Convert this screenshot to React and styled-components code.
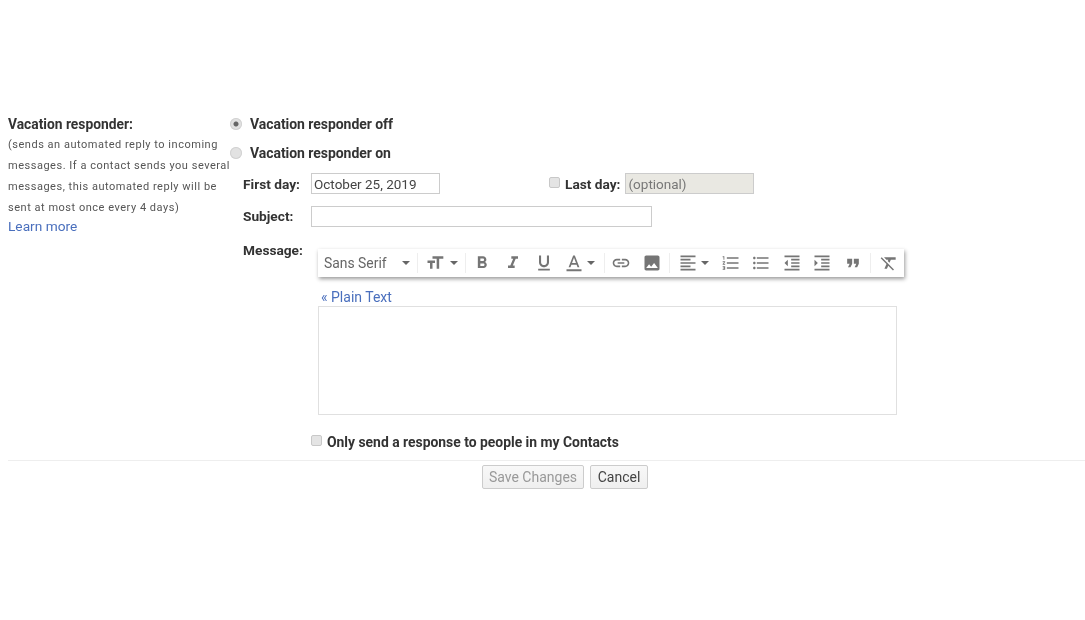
import React from "react";
import styled, { createGlobalStyle } from "styled-components";

const paths = {
  size: "M9 4v3h5v12h3V7h5V4H9zm-6 8h3v7h3v-7h3V9H3v3z",
  bold: "M15.6 10.79c.97-.67 1.65-1.77 1.65-2.79 0-2.26-1.75-4-4-4H7v14h7.04c2.09 0 3.71-1.7 3.71-3.79 0-1.52-.86-2.82-2.15-3.42zM10 6.5h3c.83 0 1.5.67 1.5 1.5s-.67 1.5-1.5 1.5h-3v-3zm3.5 9H10v-3h3.5c.83 0 1.5.67 1.5 1.5s-.67 1.5-1.5 1.5z",
  italic: "M10 4v3h2.21l-3.42 8H6v3h8v-3h-2.21l3.42-8H18V4z",
  underline: "M12 17c3.31 0 6-2.69 6-6V3h-2.5v8c0 1.93-1.57 3.5-3.5 3.5S8.5 12.93 8.5 11V3H6v8c0 3.31 2.69 6 6 6zm-7 2v2h14v-2H5z",
  color: "M11 3L5.5 17h2.25l1.12-3h6.25l1.12 3h2.25L13 3h-2zm-1.38 9L12 5.67 14.38 12H9.62zM3 19.5h18V22H3z",
  link: "M3.9 12c0-1.71 1.39-3.1 3.1-3.1h4V7H7c-2.76 0-5 2.24-5 5s2.24 5 5 5h4v-1.9H7c-1.71 0-3.1-1.39-3.1-3.1zM8 13h8v-2H8v2zm9-6h-4v1.9h4c1.71 0 3.1 1.39 3.1 3.1s-1.39 3.1-3.1 3.1h-4V17h4c2.76 0 5-2.24 5-5s-2.24-5-5-5z",
  image: "M21 19V5c0-1.1-.9-2-2-2H5c-1.1 0-2 .9-2 2v14c0 1.1.9 2 2 2h14c1.1 0 2-.9 2-2zM8.5 13.5l2.5 3.01L14.5 12l4.5 6H5l3.5-4.5z",
  align: "M15 15H3v2h12v-2zm0-8H3v2h12V7zM3 13h18v-2H3v2zm0 8h18v-2H3v2zM3 3v2h18V3H3z",
  ol: "M2 17h2v.5H3v1h1v.5H2v1h3v-4H2v1zm1-9h1V4H2v1h1v3zm-1 3h1.8L2 13.1v.9h3v-1H3.2L5 10.9V10H2v1zm5-6v2h14V5H7zm0 14h14v-2H7v2zm0-6h14v-2H7v2z",
  ul: "M4 10.5c-.83 0-1.5.67-1.5 1.5s.67 1.5 1.5 1.5 1.5-.67 1.5-1.5-.67-1.5-1.5-1.5zm0-6c-.83 0-1.5.67-1.5 1.5S3.17 7.5 4 7.5 5.5 6.83 5.5 6 4.83 4.5 4 4.5zm0 12c-.83 0-1.5.68-1.5 1.5s.68 1.5 1.5 1.5 1.5-.68 1.5-1.5-.67-1.5-1.5-1.5zM7 19h14v-2H7v2zm0-6h14v-2H7v2zm0-8v2h14V5H7z",
  outdent: "M11 17h10v-2H11v2zm-8-5l4 4V8l-4 4zm0 9h18v-2H3v2zM3 3v2h18V3H3zm8 6h10V7H11v2zm0 4h10v-2H11v2z",
  indent: "M3 21h18v-2H3v2zM3 8v8l4-4-4-4zm8 9h10v-2H11v2zM3 3v2h18V3H3zm8 6h10V7H11v2zm0 4h10v-2H11v2z",
  quote: "M6 17h3l2-4V7H5v6h3zm8 0h3l2-4V7h-6v6h3z",
  clear: "M3.27 5L2 6.27l6.97 6.97L6.5 19h3l1.57-3.66L16.73 21 18 19.73 3.55 5.27 3.27 5zM6 5v.18L8.82 8h2.4l-.72 1.68 2.1 2.1L14.21 8H20V5H6z",
};

const GlobalStyle = createGlobalStyle`
  html, body {
    margin: 0;
    background: #fff;
    font-family: Roboto, "Liberation Sans", sans-serif;
    color: #222;
  }
`;

const Page = styled.div`
  width: 1085px;
  height: 620px;
  padding-top: 114px;
  box-sizing: border-box;
  overflow: hidden;
  filter: blur(0.6px);
`;

const Settings = styled.div`
  display: flex;
  padding-left: 8px;
`;

const Sidebar = styled.div`
  width: 222px;
  flex: none;
`;

const Title = styled.div`
  font-size: 13.8px;
  font-weight: 700;
  line-height: 20px;
  color: #333;
`;

const Hint = styled.div`
  margin-top: -0.5px;
  font-size: 11px;
  line-height: 21px;
  letter-spacing: 0.52px;
  color: #555;
  white-space: nowrap;
`;

const LearnMore = styled.a`
  display: block;
  margin-top: -1.5px;
  font-size: 13.7px;
  line-height: 20px;
  color: #4a6fbd;
`;

const Form = styled.div`
  flex: 1;
`;

const RadioRow = styled.label`
  display: flex;
  align-items: center;
  height: 29px;
  margin-top: ${(p) => (p.$first ? "-4.5px" : "0")};
  font-size: 14px;
  font-weight: 700;
  color: #333;
  letter-spacing: -0.05px;
`;

const Radio = styled.span`
  width: 12px;
  height: 12px;
  margin-right: 8px;
  border-radius: 50%;
  background: ${(p) =>
    p.$checked
      ? "radial-gradient(circle, #666 0 2px, #e2e2e2 3px)"
      : "#e2e2e2"};
  box-shadow: inset 0 0 0 1px #d2d2d2;
`;

const FieldRow = styled.div`
  display: flex;
  align-items: center;
  height: ${(p) => p.$height || 32}px;
  padding-left: 13px;
`;

const FieldLabel = styled.span`
  width: 68px;
  flex: none;
  font-size: 13.7px;
  font-weight: 700;
  color: #333;
`;

const TextField = styled.input`
  width: ${(p) => p.$width}px;
  height: 21px;
  padding: 0 2px;
  box-sizing: border-box;
  border: 1px solid #ccc;
  border-radius: 0;
  outline: none;
  font-family: inherit;
  font-size: 13.5px;
  color: #444;
  background: ${(p) => (p.$disabled ? "#e9e8e2" : "#fff")};
  &::placeholder {
    color: #777;
    opacity: 1;
  }
`;

const CheckBox = styled.span`
  display: inline-block;
  flex: none;
  width: 11px;
  height: 11px;
  margin-top: -3px;
  margin-right: 5px;
  border: 1px solid #c8c8c8;
  border-radius: 2px;
  box-sizing: border-box;
  background: #e4e4e4;
`;

const LastDay = styled.label`
  display: flex;
  align-items: center;
  margin-left: 109px;
  font-size: 13.7px;
  font-weight: 700;
  color: #333;
`;

const LastDayText = styled.span`
  margin-right: 5px;
`;

const MessageRow = styled.div`
  display: flex;
  align-items: flex-start;
  padding-left: 13px;
`;

const MessageLabel = styled(FieldLabel)`
  width: 75px;
  line-height: 20px;
  margin-top: 7px;
`;

const Editor = styled.div`
  width: 586px;
  margin-top: 16px;
`;

const Toolbar = styled.div`
  display: flex;
  align-items: center;
  height: 28px;
  padding-left: 6px;
  box-sizing: border-box;
  background: #fff;
  box-shadow: 1px 2px 4px rgba(0, 0, 0, 0.4);
`;

const FontSelect = styled.div`
  display: flex;
  align-items: center;
  width: 92px;
  font-size: 13.9px;
  color: #666;
`;

const FontName = styled.span`
  width: 78px;
`;

const Arrow = styled.span`
  flex: none;
  width: 0;
  height: 0;
  border-left: 4px solid transparent;
  border-right: 4px solid transparent;
  border-top: 4px solid #666;
`;

const Separator = styled.span`
  flex: none;
  width: 1px;
  height: 20px;
  margin: 0 ${(p) => p.$gap || 1}px;
  background: #eee;
`;

const ToolButton = styled.div`
  display: flex;
  align-items: center;
  justify-content: center;
  flex: none;
  box-sizing: border-box;
  width: ${(p) => p.$width || 30.7}px;
  padding-right: ${(p) => p.$pad || 0}px;
  gap: ${(p) => p.$gap || 3}px;
`;

const IconSvg = styled.svg`
  width: 20px;
  height: 20px;
  fill: #757575;
  flex: none;
`;

const Icon = ({ name }) => (
  <IconSvg viewBox="0 0 24 24">
    <path d={paths[name]} />
  </IconSvg>
);

const PlainText = styled.a`
  display: block;
  margin: 11px 0 0 3px;
  font-size: 14px;
  line-height: 18px;
  color: #4a6fbd;
`;

const MessageBox = styled.div`
  width: 579px;
  height: 109px;
  box-sizing: border-box;
  border: 1px solid #e0e0e0;
`;

const ContactsRow = styled.label`
  display: flex;
  align-items: center;
  height: 20px;
  margin: 17px 0 0 81px;
  font-size: 13.9px;
  font-weight: 700;
  color: #333;
`;

const Divider = styled.div`
  height: 1px;
  margin: 8px 0 0 8px;
  background: #eee;
`;

const Actions = styled.div`
  display: flex;
  gap: 6px;
  padding: 4px 0 0 482px;
`;

const ActionButton = styled.button`
  width: ${(p) => p.$width}px;
  height: 24px;
  padding: 0;
  border: 1px solid #ccc;
  border-radius: 2px;
  background: linear-gradient(#f8f8f8, #efefef);
  font-family: inherit;
  font-size: 14px;
  color: ${(p) => (p.disabled ? "#999" : "#444")};
`;

export default function App() {
  return (
    <Page>
      <GlobalStyle />
      <Settings>
        <Sidebar>
          <Title>Vacation responder:</Title>
          <Hint>
            (sends an automated reply to incoming
            <br />
            messages. If a contact sends you several
            <br />
            messages, this automated reply will be
            <br />
            sent at most once every 4 days)
          </Hint>
          <LearnMore>Learn more</LearnMore>
        </Sidebar>
        <Form>
          <RadioRow $first>
            <Radio $checked />
            Vacation responder off
          </RadioRow>
          <RadioRow>
            <Radio />
            Vacation responder on
          </RadioRow>
          <FieldRow>
            <FieldLabel>First day:</FieldLabel>
            <TextField $width={129} defaultValue="October 25, 2019" />
            <LastDay>
              <CheckBox />
              <LastDayText>Last day:</LastDayText>
              <TextField $width={129} $disabled placeholder="(optional)" readOnly />
            </LastDay>
          </FieldRow>
          <FieldRow $height={33}>
            <FieldLabel>Subject:</FieldLabel>
            <TextField $width={341} />
          </FieldRow>
          <MessageRow>
            <MessageLabel>Message:</MessageLabel>
            <Editor>
              <Toolbar>
                <FontSelect>
                  <FontName>Sans Serif</FontName>
                  <Arrow />
                </FontSelect>
                <Separator />
                <ToolButton $width={45} $gap={5}>
                  <Icon name="size" />
                  <Arrow />
                </ToolButton>
                <Separator />
                <ToolButton><Icon name="bold" /></ToolButton>
                <ToolButton><Icon name="italic" /></ToolButton>
                <ToolButton><Icon name="underline" /></ToolButton>
                <ToolButton $width={44} $pad={3}>
                  <Icon name="color" />
                  <Arrow />
                </ToolButton>
                <Separator />
                <ToolButton><Icon name="link" /></ToolButton>
                <ToolButton><Icon name="image" /></ToolButton>
                <Separator $gap={1.5} />
                <ToolButton $width={44}>
                  <Icon name="align" />
                  <Arrow />
                </ToolButton>
                <ToolButton><Icon name="ol" /></ToolButton>
                <ToolButton><Icon name="ul" /></ToolButton>
                <ToolButton $width={30}><Icon name="outdent" /></ToolButton>
                <ToolButton><Icon name="indent" /></ToolButton>
                <ToolButton><Icon name="quote" /></ToolButton>
                <Separator $gap={2} />
                <ToolButton><Icon name="clear" /></ToolButton>
              </Toolbar>
              <PlainText>« Plain Text</PlainText>
              <MessageBox />
            </Editor>
          </MessageRow>
          <ContactsRow>
            <CheckBox />
            Only send a response to people in my Contacts
          </ContactsRow>
        </Form>
      </Settings>
      <Divider />
      <Actions>
        <ActionButton $width={102} disabled>Save Changes</ActionButton>
        <ActionButton $width={58}>Cancel</ActionButton>
      </Actions>
    </Page>
  );
}
